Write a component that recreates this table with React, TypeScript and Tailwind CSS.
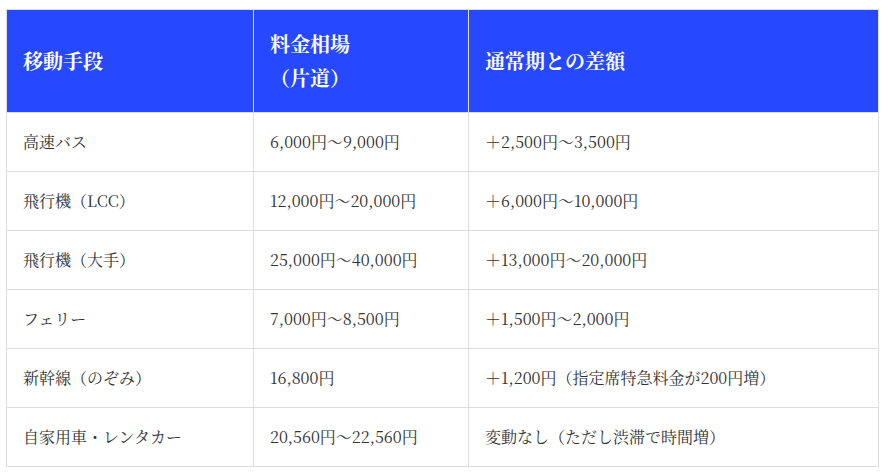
const rows: [string, string, string][] = [
  ['高速バス', '6,000円～9,000円', '＋2,500円～3,500円'],
  ['飛行機（LCC）', '12,000円～20,000円', '＋6,000円～10,000円'],
  ['飛行機（大手）', '25,000円～40,000円', '＋13,000円～20,000円'],
  ['フェリー', '7,000円～8,500円', '＋1,500円～2,000円'],
  ['新幹線（のぞみ）', '16,800円', '＋1,200円（指定席特急料金が200円増）'],
  ['自家用車・レンタカー', '20,560円～22,560円', '変動なし（ただし渋滞で時間増）'],
];

export default function App() {
  return (
    <div
      className="min-h-[472px] bg-white pl-[6px] pt-[9px]"
      style={{ fontFamily: '"Noto Serif CJK JP", "Liberation Serif", "Noto Sans CJK JP", serif' }}
    >
      <table className="w-[873px] table-fixed border-collapse border border-[#dddddd] text-left">
        <colgroup>
          <col className="w-[247px]" />
          <col className="w-[215px]" />
          <col />
        </colgroup>
        <thead>
          <tr className="bg-[#2649ff] text-white">
            <th className="border border-[#dddddd] px-4 py-[17px] text-[20px] font-bold leading-[34px]">移動手段</th>
            <th className="border border-[#dddddd] px-4 py-[17px] text-[20px] font-bold leading-[34px]">
              料金相場
              <br />
              （片道）
            </th>
            <th className="border border-[#dddddd] px-4 py-[17px] text-[20px] font-bold leading-[34px]">通常期との差額</th>
          </tr>
        </thead>
        <tbody>
          {rows.map((r) => (
            <tr key={r[0]} className="text-[16px] text-[#333333]">
              {r.map((c, i) => (
                <td key={i} className="border border-[#dddddd] px-4 py-4 leading-[26px]">
                  {c}
                </td>
              ))}
            </tr>
          ))}
        </tbody>
      </table>
    </div>
  );
}
